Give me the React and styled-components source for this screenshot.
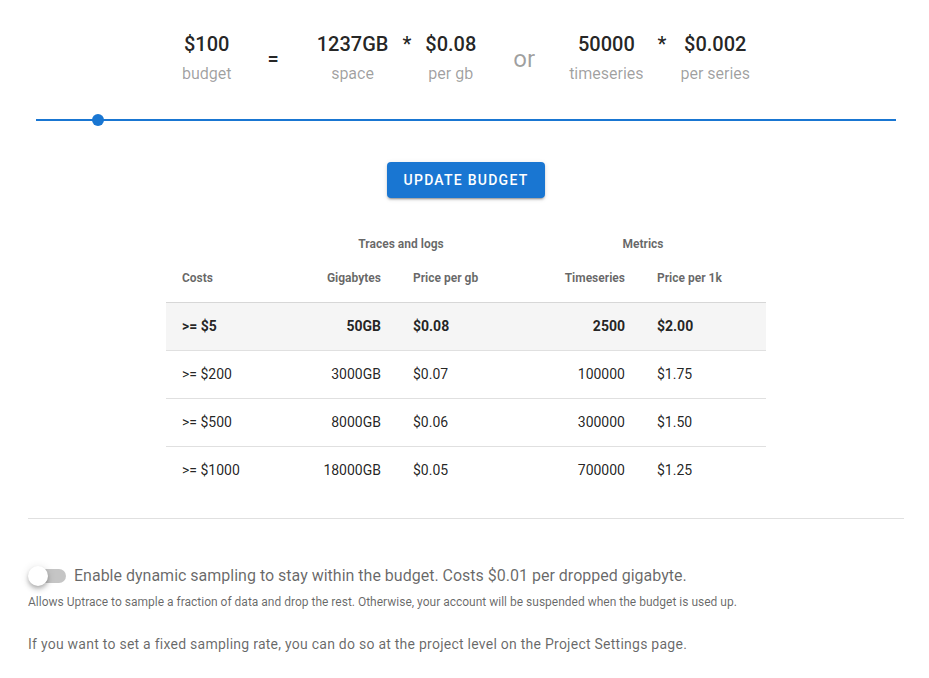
import styled, { createGlobalStyle } from "styled-components";

const GlobalStyle = createGlobalStyle`
  body {
    margin: 0;
    background: #fff;
    font-family: Roboto, "Liberation Sans", sans-serif;
    color: rgba(0, 0, 0, 0.87);
  }
`;

const tiers = [
  { cost: ">= $5", gb: "50GB", gbPrice: "$0.08", series: "2500", seriesPrice: "$2.00", active: true },
  { cost: ">= $200", gb: "3000GB", gbPrice: "$0.07", series: "100000", seriesPrice: "$1.75" },
  { cost: ">= $500", gb: "8000GB", gbPrice: "$0.06", series: "300000", seriesPrice: "$1.50" },
  { cost: ">= $1000", gb: "18000GB", gbPrice: "$0.05", series: "700000", seriesPrice: "$1.25" },
];

const budget = { value: 100, min: 0, max: 1380 };

export default function App() {
  const thumbPos = ((budget.value - budget.min) / (budget.max - budget.min)) * 100;

  return (
    <>
      <GlobalStyle />
      <Page>
        <Stats>
          <Stat>
            <Value>$100</Value>
            <Label>budget</Label>
          </Stat>
          <Equals>=</Equals>
          <Group>
            <Stat>
              <Value>1237GB</Value>
              <Label>space</Label>
            </Stat>
            <Times>*</Times>
            <Stat>
              <Value>$0.08</Value>
              <Label>per gb</Label>
            </Stat>
          </Group>
          <Or>or</Or>
          <Group>
            <Stat>
              <Value>50000</Value>
              <Label>timeseries</Label>
            </Stat>
            <Times>*</Times>
            <Stat>
              <Value>$0.002</Value>
              <Label>per series</Label>
            </Stat>
          </Group>
        </Stats>

        <Slider>
          <Track>
            <Thumb style={{ left: `${thumbPos}%` }} />
          </Track>
        </Slider>

        <Actions>
          <Button type="button">Update budget</Button>
        </Actions>

        <Table>
          <colgroup>
            <col style={{ width: 116 }} />
            <col style={{ width: 115 }} />
            <col style={{ width: 123 }} />
            <col style={{ width: 121 }} />
            <col style={{ width: 125 }} />
          </colgroup>
          <thead>
            <GroupRow>
              <th />
              <th colSpan={2}>Traces and logs</th>
              <th colSpan={2}>Metrics</th>
            </GroupRow>
            <HeadRow>
              <Th>Costs</Th>
              <Th $right>Gigabytes</Th>
              <Th>Price per gb</Th>
              <Th $right>Timeseries</Th>
              <Th>Price per 1k</Th>
            </HeadRow>
          </thead>
          <tbody>
            {tiers.map((t) => (
              <Row key={t.cost} $active={t.active}>
                <Td>{t.cost}</Td>
                <Td $right>{t.gb}</Td>
                <Td>{t.gbPrice}</Td>
                <Td $right>{t.series}</Td>
                <Td>{t.seriesPrice}</Td>
              </Row>
            ))}
          </tbody>
        </Table>

        <Divider />

        <SwitchRow>
          <Switch>
            <SwitchTrack />
            <SwitchThumb />
          </Switch>
          <SwitchLabel>
            Enable dynamic sampling to stay within the budget. Costs $0.01 per dropped gigabyte.
          </SwitchLabel>
        </SwitchRow>
        <Hint>
          Allows Uptrace to sample a fraction of data and drop the rest. Otherwise, your account
          will be suspended when the budget is used up.
        </Hint>
        <Note>
          If you want to set a fixed sampling rate, you can do so at the project level on the
          Project Settings page.
        </Note>
      </Page>
    </>
  );
}

const Page = styled.div`
  width: 876px;
  margin-left: 28px;
  padding-top: 30px;
`;

const Stats = styled.div`
  display: flex;
  justify-content: center;
  align-items: flex-start;
  gap: 38px;
`;

const Group = styled.div`
  display: flex;
  align-items: flex-start;
  gap: 14px;
`;

const Stat = styled.div`
  display: flex;
  flex-direction: column;
  align-items: center;
`;

const Value = styled.div`
  font-size: 20px;
  line-height: 28px;
  font-weight: 500;
  color: rgba(0, 0, 0, 0.87);
`;

const Label = styled.div`
  margin-top: 4px;
  font-size: 16px;
  line-height: 24px;
  color: rgba(0, 0, 0, 0.38);
`;

const Times = styled.div`
  font-size: 20px;
  line-height: 28px;
  font-weight: 500;
`;

const Equals = styled.div`
  margin: 15px 0 0 -2px;
  font-size: 20px;
  line-height: 28px;
  font-weight: 500;
`;

const Or = styled.div`
  margin: 13px -4px 0 -1px;
  font-size: 24px;
  line-height: 32px;
  color: rgba(0, 0, 0, 0.38);
`;

const Slider = styled.div`
  margin-top: 18px;
  height: 32px;
  padding: 0 8px;
  display: flex;
  align-items: center;
`;

const Track = styled.div`
  position: relative;
  flex: 1;
  height: 2px;
  background: #1976d2;
`;

const Thumb = styled.div`
  position: absolute;
  top: 50%;
  width: 12px;
  height: 12px;
  border-radius: 50%;
  background: #1976d2;
  transform: translate(-50%, -50%);
`;

const Actions = styled.div`
  margin-top: 26px;
  display: flex;
  justify-content: center;
`;

const Button = styled.button`
  height: 36px;
  padding: 0 17px;
  border: 0;
  border-radius: 4px;
  background: #1976d2;
  color: #fff;
  font-family: Roboto, "Liberation Sans", sans-serif;
  font-size: 14px;
  font-weight: 500;
  letter-spacing: 0.0892857em;
  text-transform: uppercase;
  box-shadow: 0 3px 1px -2px rgba(0, 0, 0, 0.2), 0 2px 2px 0 rgba(0, 0, 0, 0.14),
    0 1px 5px 0 rgba(0, 0, 0, 0.12);
  cursor: pointer;
`;

const Table = styled.table`
  width: 600px;
  margin: 30px auto 0;
  border-collapse: collapse;
  table-layout: fixed;
`;

const GroupRow = styled.tr`
  th {
    height: 32px;
    padding: 0 16px;
    font-size: 12px;
    font-weight: 700;
    color: rgba(0, 0, 0, 0.6);
    text-align: center;
    vertical-align: middle;
  }
`;

const HeadRow = styled.tr`
  border-bottom: 1px solid rgba(0, 0, 0, 0.12);
`;

const Th = styled.th`
  height: 42px;
  padding: 0 16px;
  font-size: 12px;
  font-weight: 700;
  color: rgba(0, 0, 0, 0.6);
  text-align: ${({ $right }) => ($right ? "right" : "left")};
  vertical-align: top;
  padding-top: 11px;
  box-sizing: border-box;
`;

const Row = styled.tr`
  background: ${({ $active }) => ($active ? "#f5f5f5" : "transparent")};
  font-weight: ${({ $active }) => ($active ? 700 : 400)};
  border-bottom: 1px solid rgba(0, 0, 0, 0.12);

  &:last-child {
    border-bottom: 0;
  }
`;

const Td = styled.td`
  height: 47px;
  padding: 0 16px;
  font-size: 14px;
  color: rgba(0, 0, 0, 0.87);
  text-align: ${({ $right }) => ($right ? "right" : "left")};
`;

const Divider = styled.hr`
  margin: 24px 0 0;
  border: 0;
  border-top: 1px solid rgba(0, 0, 0, 0.12);
`;

const SwitchRow = styled.div`
  margin-top: 45px;
  display: flex;
  align-items: center;
  height: 24px;
`;

const Switch = styled.div`
  position: relative;
  width: 38px;
  height: 24px;
  margin-right: 8px;
  flex-shrink: 0;
`;

const SwitchTrack = styled.div`
  position: absolute;
  left: 2px;
  top: 5px;
  width: 36px;
  height: 14px;
  border-radius: 8px;
  background: rgba(0, 0, 0, 0.38);
  opacity: 0.6;
`;

const SwitchThumb = styled.div`
  position: absolute;
  left: 0;
  top: 2px;
  width: 20px;
  height: 20px;
  border-radius: 50%;
  background: #fff;
  box-shadow: 0 2px 4px -1px rgba(0, 0, 0, 0.2), 0 4px 5px 0 rgba(0, 0, 0, 0.14),
    0 1px 10px 0 rgba(0, 0, 0, 0.12);
`;

const SwitchLabel = styled.label`
  font-size: 16px;
  line-height: 20px;
  color: rgba(0, 0, 0, 0.6);
`;

const Hint = styled.div`
  margin-top: 7px;
  font-size: 12px;
  line-height: 14px;
  color: rgba(0, 0, 0, 0.6);
`;

const Note = styled.p`
  margin: 25px 0 0;
  font-size: 14px;
  line-height: 20px;
  letter-spacing: 0.0178571em;
  color: rgba(0, 0, 0, 0.6);
`;
